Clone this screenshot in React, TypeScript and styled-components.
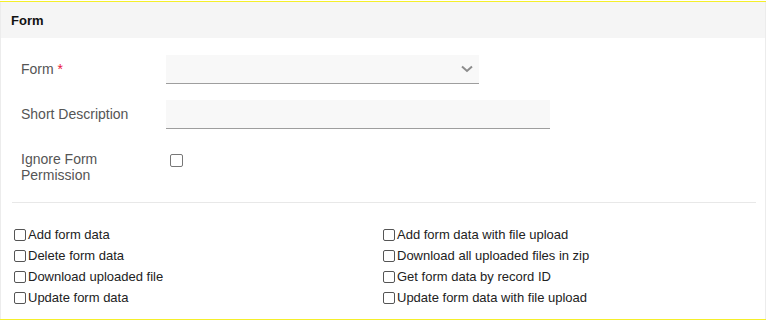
import React from "react";
import styled, { createGlobalStyle } from "styled-components";

const Global = createGlobalStyle`
  html, body { margin: 0; padding: 0; background: #fff; }
  body { font-family: "Liberation Sans", Arial, sans-serif; }
`;

const Page = styled.div`
  margin-top: 1px;
  width: 766px;
  border-top: 1px solid #f5ef2a;
  border-bottom: 1px solid #f5ef2a;
  box-sizing: border-box;
  height: 319px;
`;

const Card = styled.div`
  height: 317px;
  border-left: 1px solid #ececec;
  border-right: 1px solid #ececec;
  box-sizing: border-box;
  display: flex;
  flex-direction: column;
`;

const Header = styled.div`
  height: 36px;
  background: #f5f5f5;
  display: flex;
  align-items: center;
  padding-left: 10px;
  font-size: 13px;
  font-weight: bold;
  color: #111;
`;

const Body = styled.div`
  padding: 16px 10px 0 10px;
  display: flex;
  flex-direction: column;
`;

const FieldRow = styled.div<{ $h: number; $top: number; $align?: string }>`
  display: flex;
  align-items: ${(p) => p.$align || "center"};
  height: ${(p) => p.$h}px;
  margin-top: ${(p) => p.$top}px;
  padding-left: 10px;
`;

const Label = styled.div`
  width: 120px;
  margin-right: 25px;
  font-size: 14px;
  line-height: 16px;
  color: #555;
`;

const Req = styled.span`
  color: #e8193c;
`;

const InputBox = styled.div<{ $w: number }>`
  width: ${(p) => p.$w}px;
  height: 28px;
  background: #f8f8f8;
  border-bottom: 1px solid #9e9e9e;
  display: flex;
  align-items: center;
  justify-content: flex-end;
  padding-right: 6px;
  box-sizing: content-box;
`;

const Check = styled.span<{ $size: number; $color: string }>`
  display: inline-block;
  flex: none;
  width: ${(p) => p.$size}px;
  height: ${(p) => p.$size}px;
  box-sizing: border-box;
  border: 1px solid ${(p) => p.$color};
  border-radius: 2px;
  background: #fff;
`;

const CheckWrap = styled.div`
  margin-left: 4px;
  padding-top: 2px;
`;

const Divider = styled.div`
  height: 1px;
  background: #e8e8e8;
  margin: 19px 0 0 1px;
  width: 744px;
`;

const Grid = styled.div`
  display: grid;
  grid-template-columns: 369px 1fr;
  grid-auto-rows: 21px;
  margin-top: 21px;
  padding-left: 3px;
`;

const Option = styled.label`
  display: flex;
  align-items: center;
  font-size: 13px;
  color: #222;
  gap: 2px;
`;

const Chevron = () => (
  <svg width="12" height="8" viewBox="0 0 12 8">
    <path d="M1 1.5 L6 6 L11 1.5" fill="none" stroke="#8c8c8c" strokeWidth="2" />
  </svg>
);

const left = ["Add form data", "Delete form data", "Download uploaded file", "Update form data"];
const right = [
  "Add form data with file upload",
  "Download all uploaded files in zip",
  "Get form data by record ID",
  "Update form data with file upload",
];

export default function App() {
  const items: string[] = [];
  for (let i = 0; i < 4; i++) {
    items.push(left[i], right[i]);
  }
  return (
    <>
      <Global />
      <Page>
        <Card>
          <Header>Form</Header>
          <Body>
            <FieldRow $h={30} $top={0}>
              <Label>
                Form <Req>*</Req>
              </Label>
              <InputBox $w={307}>
                <Chevron />
              </InputBox>
            </FieldRow>
            <FieldRow $h={30} $top={15}>
              <Label>Short Description</Label>
              <InputBox $w={378} />
            </FieldRow>
            <FieldRow $h={32} $top={22} $align="flex-start">
              <Label>Ignore Form Permission</Label>
              <CheckWrap>
                <Check $size={13} $color="#777" />
              </CheckWrap>
            </FieldRow>
            <Divider />
            <Grid>
              {items.map((t) => (
                <Option key={t}>
                  <Check $size={12} $color="#555" />
                  {t}
                </Option>
              ))}
            </Grid>
          </Body>
        </Card>
      </Page>
    </>
  );
}
